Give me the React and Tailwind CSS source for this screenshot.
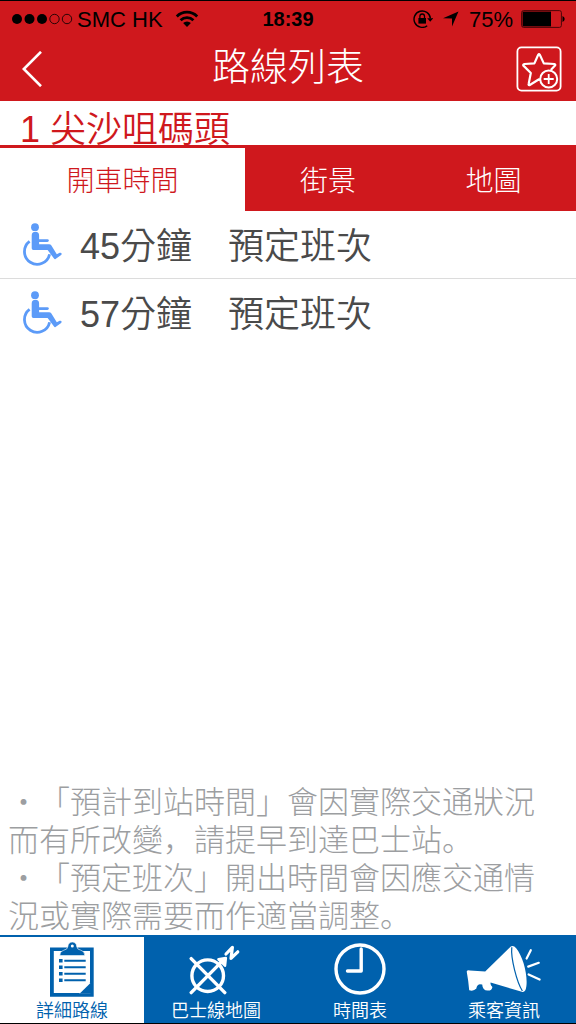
import React, { useState } from "react";

const tabs = [
  { id: "departures", label: "開車時間" },
  { id: "street", label: "街景" },
  { id: "map", label: "地圖" },
];

const departures = [
  { minutes: 45, note: "預定班次" },
  { minutes: 57, note: "預定班次" },
];

const SignalDots = () => (
  <svg className="w-[62px] h-3" viewBox="0 0 62 12" aria-hidden="true">
    <circle cx="6" cy="6" r="5" />
    <circle cx="18.5" cy="6" r="5" />
    <circle cx="31" cy="6" r="5" />
    <circle cx="43.5" cy="6" r="4.7" fill="none" stroke="#000" strokeWidth="0.8" />
    <circle cx="56" cy="6" r="4.7" fill="none" stroke="#000" strokeWidth="0.8" />
  </svg>
);

const WifiIcon = () => (
  <svg className="w-6 h-[18px]" viewBox="0 0 24 18" fill="none" stroke="#000" strokeWidth="2.8" aria-hidden="true">
    <path d="M1.8 6.4a14.4 14.4 0 0 1 20.4 0" />
    <path d="M5.6 10.2a9 9 0 0 1 12.8 0" />
    <path d="M12 17l-3.9-3.9a5.5 5.5 0 0 1 7.8 0z" fill="#000" stroke="none" />
  </svg>
);

const RotationLockIcon = () => (
  <svg className="w-5 h-[18px]" viewBox="0 0 20 18" fill="none" stroke="#000" aria-hidden="true">
    <path d="M14.2 15.7A8.2 8.2 0 1 1 17.4 8.4" strokeWidth="1.4" />
    <path d="M14.2 8.2h6l-3 3.6z" fill="#000" stroke="none" />
    <rect x="5.4" y="8" width="7.6" height="5.6" fill="#000" stroke="none" />
    <path d="M6.9 8V6.3a2.3 2.3 0 0 1 4.6 0V8" strokeWidth="1.3" />
  </svg>
);

const LocationIcon = () => (
  <svg className="w-4 h-4" viewBox="0 0 16 16" aria-hidden="true">
    <path d="M15.5.5L9 15.5V7.6L0 7.2z" />
  </svg>
);

const BatteryIcon = () => (
  <svg className="w-11 h-[18px]" viewBox="0 0 44 18" aria-hidden="true">
    <rect x="0.6" y="0.6" width="39.8" height="16.8" rx="2" fill="none" stroke="#4a0508" strokeWidth="1" />
    <rect x="1.6" y="1.6" width="28.4" height="14.8" />
    <path d="M41.5 6q2.2.8 2.2 3t-2.2 3z" />
  </svg>
);

const StarPlusIcon = () => (
  <svg className="w-[46px] h-[46px]" viewBox="0 0 46 46" fill="none" stroke="#fff" strokeLinejoin="round" aria-hidden="true">
    <rect x="1.4" y="1.4" width="43.2" height="43.2" rx="4" strokeWidth="1.8" />
    <path
      d="M24.2 34.2L23 33.3 13.4 39.2Q12.2 39 12.7 37.8L14.8 27 7.2 19.4Q7 18.2 8.6 18L18.4 17.4 22.2 8.8Q23 7.6 23.8 8.8L27.8 17.4 38.4 18Q39.8 18.4 39 19.6L34.8 24"
      strokeWidth="2.2"
    />
    <circle cx="32.7" cy="33" r="8.5" strokeWidth="2" />
    <path d="M32.7 28v10M27.7 33h10" strokeWidth="1.8" />
  </svg>
);

const WheelchairIcon = () => (
  <svg className="w-10 h-11 shrink-0" viewBox="0 0 40 44" fill="#5c9bf8" role="img" aria-label="輪椅">
    <circle cx="13" cy="4.2" r="3.9" />
    <path d="M9.7 12.4a3.7 3.7 0 0 1 7.4 0V21.3H27q1.6 0 2.4 1.2l5.4 8.8 2.8-1.5q1.6-.5 2 .8.2 1-.8 1.6l-5.6 4q-.6.2-1-.4L25.6 27H11.4Q9.7 27 9.7 25.2z" />
    <path d="M16 17.6h9.4" fill="none" stroke="#5c9bf8" strokeWidth="2.8" strokeLinecap="round" />
    <path d="M7.6 18.4A12.7 12.7 0 1 0 27.6 31.2" fill="none" stroke="#5c9bf8" strokeWidth="2.8" />
  </svg>
);

const ClipboardIcon = () => (
  <svg className="w-[46px] h-14" viewBox="0 0 46 56" fill="#0061ad" aria-hidden="true">
    <path d="M1 6.5h43.7v49.2H1zM4.8 10v42H31l10-10.6V10z" fillRule="evenodd" />
    <path d="M30.5 52.5V45q0-3 3-3h8v10.5z" fill="#fff" />
    <path d="M30.5 52.8L42 41.4v11.4z" />
    <path d="M10.8 14.6q0-4.6 4-5.4 3.6-.4 4.1-3.8a4.4 4.4 0 0 1 8.8 0q.5 3.4 4.1 3.8 4 .8 4 5.4z" stroke="#fff" strokeWidth="0.6" />
    <circle cx="23.3" cy="5" r="1.5" fill="#fff" />
    <path d="M10 17.9h3.6v3.6H10zm0 6.5h3.6V28H10zm0 6.5h3.6v3.6H10zm0 6.5h3.6V41H10z" />
    <path d="M15.3 19.7h21.4M15.3 26.2h21.4M15.3 32.7h21.4M15.3 39.2h21.4" stroke="#0061ad" strokeWidth="1.9" />
  </svg>
);

const CompassIcon = () => (
  <svg className="w-[54px] h-14" viewBox="2 -4 54 56" fill="none" stroke="#fff" strokeLinecap="round" strokeLinejoin="round" aria-hidden="true">
    <circle cx="20.7" cy="30.7" r="15.8" strokeWidth="3.4" />
    <path d="M4.2 13.6l33.6 34M4.2 47.6l30.8-31.2" strokeWidth="3.4" />
    <path d="M31.5 14.2l7.3-1.2-.8 7.6z" fill="#fff" strokeWidth="2.6" />
    <path d="M39 9l6.4-6.6-1.4 11 6.8-6.6" strokeWidth="3.2" />
  </svg>
);

const ClockIcon = () => (
  <svg className="w-[54px] h-14" viewBox="0 0 54 56" fill="none" stroke="#fff" aria-hidden="true">
    <circle cx="27" cy="28" r="24" strokeWidth="3.4" />
    <path d="M28.2 8V30H14.5" strokeWidth="3.4" strokeLinecap="round" strokeLinejoin="round" />
  </svg>
);

const MegaphoneIcon = () => (
  <svg className="w-[76px] h-14" viewBox="0 -3 76 56" fill="#fff" aria-hidden="true">
    <path d="M.7 27.6Q1 26 3.8 26.4L19.2 27.4 44.8 2.4Q47.4.8 50.2 4.2C56.8 12.4 61.8 30 60.4 42Q59.6 49 55.8 47.8L24.6 38.6Q24 41 26.4 43Q26 46.8 21.6 46.6 16.6 46.4 16.2 40.4L13.8 40.2Q10.6 41 10.4 44.6 7.4 47.6 3.2 46.2 2.6 38 .7 27.6z" />
    <path d="M45.8 3.2C44.6 14 50.8 38 56.4 47" fill="none" stroke="#0061ad" strokeWidth="1.2" />
    <path d="M60.6 14.6l4.2-8.4M62.2 22.6l10.6-3.8M62.6 30.4l11 5.2" fill="none" stroke="#fff" strokeWidth="2.2" strokeLinecap="round" />
  </svg>
);

const navItems = [
  { id: "detail", label: "詳細路線", Icon: ClipboardIcon },
  { id: "busmap", label: "巴士線地圖", Icon: CompassIcon },
  { id: "timetable", label: "時間表", Icon: ClockIcon },
  { id: "info", label: "乘客資訊", Icon: MegaphoneIcon },
];

const App = () => {
  const [activeTab, setActiveTab] = useState("departures");
  const [activeNav, setActiveNav] = useState("detail");

  return (
    <div
      lang="zh-Hant"
      className="min-h-screen flex flex-col bg-white border-y border-black font-['Liberation_Sans','Noto_Sans_CJK_TC',sans-serif]"
    >
      <header className="bg-[#cf181d]">
        <div className="grid grid-cols-[1fr_auto_1fr] items-center h-9 px-[11px] text-[22px] text-black">
          <div className="flex items-center gap-1">
            <SignalDots />
            <span>SMC HK</span>
            <span className="ml-2"><WifiIcon /></span>
          </div>
          <span className="text-xl font-bold">18:39</span>
          <div className="flex items-center justify-end gap-2">
            <RotationLockIcon />
            <span className="mx-0.5"><LocationIcon /></span>
            <span>75%</span>
            <BatteryIcon />
          </div>
        </div>
        <div className="flex items-center justify-between h-16 px-[14px]">
          <button type="button" aria-label="返回" className="w-[46px] h-[46px] flex items-center pl-2">
            <svg className="w-5 h-9" viewBox="0 0 20 36" fill="none" stroke="#fff" strokeWidth="2.6" aria-hidden="true">
              <path d="M19 .8L1.8 18 19 35.2" />
            </svg>
          </button>
          <h1 className="pb-1 text-[38px] leading-[56px] font-light text-white">路線列表</h1>
          <button type="button" aria-label="加入收藏">
            <StarPlusIcon />
          </button>
        </div>
      </header>

      <h2 className="h-11 pl-5 text-[36px] leading-[58px] font-[350] text-[#cf181d] whitespace-pre">1 尖沙咀碼頭</h2>

      <div role="tablist" className="grid grid-cols-[245fr_166fr_165fr] h-[66px] pt-[3px] bg-[#cf181d]">
        {tabs.map((tab) => (
          <button
            key={tab.id}
            type="button"
            role="tab"
            aria-selected={activeTab === tab.id}
            onClick={() => setActiveTab(tab.id)}
            className={`pt-1 text-[28px] font-light ${
              activeTab === tab.id ? "bg-white text-[#cf181d]" : "text-white"
            }`}
          >
            {tab.label}
          </button>
        ))}
      </div>

      <main className="flex-1 flex flex-col">
        <ul className="divide-y divide-[#dcdcdc]">
          {departures.map((item) => (
            <li key={item.minutes} className="flex items-center h-[68px] pl-[22px] text-[36px] text-[#4a4a4a]">
              <WheelchairIcon />
              <span className="ml-[18px] w-[148px] pt-1 font-[350]">{item.minutes}分鐘</span>
              <span className="pt-1 font-[350]">{item.note}</span>
            </li>
          ))}
        </ul>

        <div className="mt-auto pl-2 pr-6 pb-0.5 text-[31px] leading-[38px] font-light text-[#9c9ea1] font-['Noto_Sans_CJK_SC',sans-serif] [text-spacing-trim:space-all]">
          <p lang="zh-Hans">・「預計到站時間」會因實際交通狀況而有所改變，請提早到達巴士站。</p>
          <p lang="zh-Hans">・「預定班次」開出時間會因應交通情況或實際需要而作適當調整。</p>
        </div>
      </main>

      <nav className="grid grid-cols-4 h-[88px] bg-[#0061ad] border-t-2 border-[#0061ad]">
        {navItems.map(({ id, label, Icon }) => (
          <a
            key={id}
            href={`#${id}`}
            onClick={() => setActiveNav(id)}
            aria-current={activeNav === id ? "page" : undefined}
            className={`flex flex-col items-center pt-1 text-lg leading-5 ${
              activeNav === id ? "bg-white text-[#0061ad]" : "text-white"
            }`}
          >
            <Icon />
            <span className="mt-1 font-[350]">{label}</span>
          </a>
        ))}
      </nav>
    </div>
  );
};

export default App;
